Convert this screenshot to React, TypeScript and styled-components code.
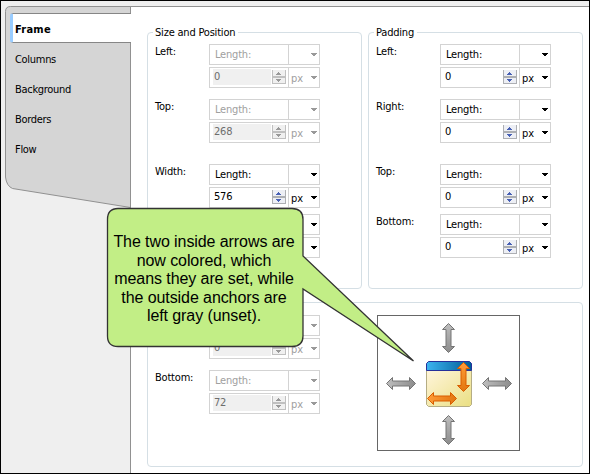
import React from "react";
import styled, { createGlobalStyle } from "styled-components";

const GlobalStyle = createGlobalStyle`
  * { box-sizing: border-box; }
  body { margin: 0; overflow: hidden; }
`;

const Window = styled.div`
  width: 590px;
  height: 474px;
  border: 1px solid #000;
  background: #efefef;
  padding-top: 5px;
  display: flex;
  position: relative;
  font: 11px/14px "DejaVu Sans Condensed", "DejaVu Sans", sans-serif;
  font-stretch: condensed;
  color: #000;
`;

const Sidebar = styled.nav`
  width: 130px;
  margin-right: -1px;
  padding: 7px 0 0 9px;
  position: relative;
  z-index: 1;
`;

const SidebarShape = styled.svg`
  position: absolute;
  left: 0;
  top: 0;
`;

const Tab = styled.div<{ $active?: boolean }>`
  position: relative;
  height: 30px;
  width: 121px;
  padding-left: ${(p) => (p.$active ? 2 : 5)}px;
  line-height: 33px;
  letter-spacing: ${(p) => (p.$active ? "0.25px" : "-0.3px")};
  font-weight: ${(p) => (p.$active ? "bold" : "normal")};
  ${(p) =>
    p.$active &&
    `
    background: #fff;
    border: 1px solid #868686;
    border-left: 3px solid #99ccff;
    border-right: 0;
    border-radius: 3px 0 0 3px;
    line-height: 31px;
  `}
`;

const Content = styled.main`
  flex: 1;
  background: #fff;
  border-top: 1px solid #919191;
  border-left: 1px solid #919191;
  padding: 25px 6px 0 16px;
  display: grid;
  grid-template-columns: 215px 215px;
  grid-template-rows: 257px 165px;
  column-gap: 6px;
  row-gap: 13px;
`;

const Group = styled.section<{ $wide?: boolean }>`
  border: 1px solid #d5dfe5;
  border-radius: 4px;
  padding: 0 0 0 7px;
  ${(p) => p.$wide && "grid-column: 1 / 3; width: 436px; display: flex; padding-top: 12px;"}
`;

const Legend = styled.div`
  width: max-content;
  height: 14px;
  margin: -7px 0 4px -2px;
  padding: 0 3px 0 2px;
  background: #fff;
  letter-spacing: -0.2px;
`;

const Field = styled.div<{ $gap: number; $label: number }>`
  display: grid;
  grid-template-columns: ${(p) => p.$label}px 111px;
  height: 44px;
  margin-bottom: ${(p) => p.$gap}px;
`;

const Label = styled.div`
  padding-top: 1px;
  letter-spacing: -0.2px;
`;

const Controls = styled.div`
  display: grid;
  grid-template-rows: 21px 21px;
  row-gap: 2px;
`;

const Control = styled.div<{ $off?: boolean }>`
  display: flex;
  border: 1px solid #d3d3d3;
  background: #fff;
  color: ${(p) => (p.$off ? "#a0a0a0" : "#000")};
`;

const Kind = styled.div`
  width: 78px;
  padding-left: 5px;
  line-height: 20px;
  letter-spacing: -0.2px;
`;

const Value = styled.div<{ $off?: boolean }>`
  width: 78px;
  padding: 1px 2px 2px 3px;
  display: flex;
  justify-content: space-between;
  color: ${(p) => (p.$off ? "#6d6d6d" : "#000")};
`;

const Digits = styled.div<{ $off?: boolean }>`
  width: 58px;
  height: 16px;
  padding-left: 1px;
  line-height: 15px;
  letter-spacing: -0.2px;
  background: ${(p) => (p.$off ? "#f0f0f0" : "#fff")};
`;

const Unit = styled.div`
  flex: 1;
  border-left: 1px solid #d3d3d3;
  display: flex;
  justify-content: space-between;
  padding: 0 1px 0 2px;
  line-height: 21px;
`;

const SpinIcon = styled.svg`
  display: block;
  margin-top: 1px;
`;

const DropIcon = styled.svg`
  display: block;
  margin: 8px 0 0 auto;
`;

const AnchorBox = styled.svg`
  display: block;
  margin-left: 57px;
`;

const Callout = styled.aside`
  position: absolute;
  left: 105px;
  top: 206px;
  width: 312px;
  height: 162px;
  z-index: 2;
`;

const CalloutShape = styled.svg`
  position: absolute;
  left: 0;
  top: 0;
`;

const CalloutText = styled.p`
  position: relative;
  margin: 0;
  padding-top: 26px;
  width: 196px;
  text-align: center;
  white-space: pre-line;
  font: 16px/18.5px "Liberation Sans", Arial, sans-serif;
  letter-spacing: -0.08px;
`;

function Spinner({ off }: { off?: boolean }) {
  const arrow = off ? "#999" : "#4760b5";
  return (
    <SpinIcon width="14" height="14" shapeRendering="crispEdges">
      <path d="M0 0h14v14H0z" fill={off ? "#f0f0f0" : "#edeff5"} />
      <path d="M0 0h1v14H0zM13 0h1v14h-1zM0 6h14v2H0zM0 13h14v1H0z" fill={off ? "#c0c0c0" : "#adafb3"} />
      <path d="M6 2h1v1H6zM5 3h3v1H5zM4 4h5v1H4zM4 9h5v1H4zM5 10h3v1H5zM6 11h1v1H6z" fill={arrow} />
    </SpinIcon>
  );
}

function Drop({ off }: { off?: boolean }) {
  return (
    <DropIcon width="8" height="4" shapeRendering="crispEdges">
      <path d="M1 0h6v1H1zM2 1h4v1H2zM3 2h2v1H3z" fill={off ? "#999" : "#000"} />
    </DropIcon>
  );
}

type FieldProps = {
  label?: string;
  kind?: string;
  value?: string;
  unit?: string;
  gap: number;
  off?: boolean;
  labelWidth?: number;
};

function LengthField({ label, kind = "Length:", value, unit = "px", gap, off, labelWidth = 54 }: FieldProps) {
  return (
    <Field $gap={gap} $label={labelWidth}>
      <Label>{label}</Label>
      <Controls>
        <Control $off={off}>
          <Kind>{kind}</Kind>
          <Unit><Drop off={off} /></Unit>
        </Control>
        <Control $off={off}>
          <Value $off={off}>
            <Digits $off={off}>{value}</Digits>
            <Spinner off={off} />
          </Value>
          <Unit>{unit}<Drop off={off} /></Unit>
        </Control>
      </Controls>
    </Field>
  );
}

const ARROW = "M0.5 6.5L6.5 .5V4H23.5V.5L29.5 6.5L23.5 12.5V9H6.5V12.5Z";

function Arrow({ x, y, vertical, set }: { x: number; y: number; vertical?: boolean; set?: boolean }) {
  return (
    <path
      d={ARROW}
      transform={vertical ? `translate(${x + 13} ${y}) rotate(90)` : `translate(${x} ${y})`}
      fill={set ? "url(#orange)" : "url(#gray)"}
      stroke={set ? "#d95d00" : "#747474"}
    />
  );
}

function AnchorDiagram() {
  return (
    <AnchorBox width="143" height="136">
      <defs>
        <linearGradient id="gray"><stop stopColor="#bebebe" /><stop offset="1" stopColor="#8c8c8c" /></linearGradient>
        <linearGradient id="orange"><stop stopColor="#ff9c38" /><stop offset="1" stopColor="#e27610" /></linearGradient>
        <linearGradient id="header"><stop stopColor="#3cb4f0" /><stop offset="1" stopColor="#005b96" /></linearGradient>
        <linearGradient id="page" x2="1" y2="1"><stop stopColor="#fff5dc" /><stop offset="1" stopColor="#eadf82" /></linearGradient>
      </defs>
      <rect x=".5" y=".5" width="142" height="135" fill="#fff" stroke="#666" />
      <path d="M49.5 55.5H94.5V89.5L92.5 91.5H51.5L49.5 89.5Z" fill="url(#page)" stroke="#b5ad84" />
      <path d="M49.5 55.5V48.5L51.5 46.5H92.5L94.5 48.5V55.5Z" fill="url(#header)" stroke="#26309a" />
      <Arrow x={65} y={8} vertical />
      <Arrow x={65} y={100} vertical />
      <Arrow x={9} y={62} />
      <Arrow x={105} y={62} />
      <Arrow x={80} y={47} vertical set />
      <Arrow x={50} y={77} set />
    </AnchorBox>
  );
}

export default function App() {
  return (
    <>
      <GlobalStyle />
      <Window>
        <Sidebar>
          <SidebarShape width="130" height="210">
            <path d="M129.5 .5H9.5Q4.5 .5 4.5 5.5V171Q5.5 180 11.5 182.5L129.5 201.5Z" fill="#d5d5d5" stroke="#919191" />
          </SidebarShape>
          <Tab $active>Frame</Tab>
          <Tab>Columns</Tab>
          <Tab>Background</Tab>
          <Tab>Borders</Tab>
          <Tab>Flow</Tab>
        </Sidebar>
        <Content>
          <Group>
            <Legend>Size and Position</Legend>
            <LengthField label="Left:" value="0" gap={11} off />
            <LengthField label="Top:" value="268" gap={21} off />
            <LengthField label="Width:" value="576" gap={6} />
            <LengthField kind="" unit="" gap={0} />
          </Group>
          <Group>
            <Legend>Padding</Legend>
            <LengthField label="Left:" value="0" gap={11} labelWidth={64} />
            <LengthField label="Right:" value="0" gap={21} labelWidth={64} />
            <LengthField label="Top:" value="0" gap={6} labelWidth={64} />
            <LengthField label="Bottom:" value="0" gap={0} labelWidth={64} />
          </Group>
          <Group $wide>
            <div>
              <LengthField kind="" value="0" gap={11} off />
              <LengthField label="Bottom:" value="72" gap={0} off />
            </div>
            <AnchorDiagram />
          </Group>
        </Content>
        <Callout>
          <CalloutShape width="312" height="162">
            <path
              d="M12 1.5H186Q197 1.5 197 12.5V49L307.5 154L197 82V129Q197 139.5 186 139.5H12Q1.5 139.5 1.5 129V12.5Q1.5 1.5 12 1.5Z"
              fill="#c2ee86"
              stroke="#333"
              strokeWidth="1.3"
            />
          </CalloutShape>
          <CalloutText>
            {"The two inside arrows are\nnow colored, which\nmeans they are set, while\nthe outside anchors are\nleft gray (unset)."}
          </CalloutText>
        </Callout>
      </Window>
    </>
  );
}
